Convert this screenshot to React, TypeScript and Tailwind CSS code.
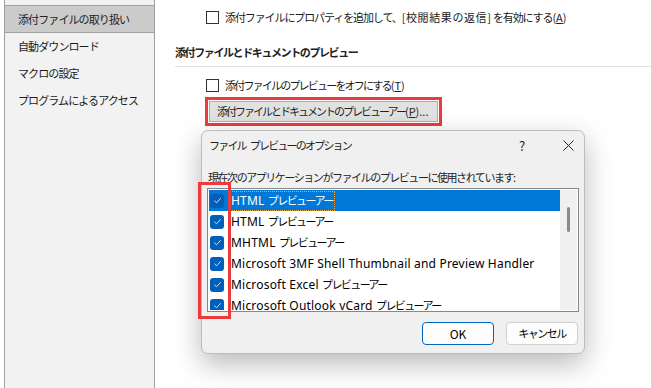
import React from 'react';

const font = { fontFamily: '"Noto Sans CJK JP", "Noto Sans", sans-serif' };

function Box() {
  return <span className="inline-block w-[13px] h-[13px] border border-[#333] bg-white shrink-0" />;
}

function BlueCheck() {
  return (
    <span className="w-[14px] h-[14px] rounded-[3px] bg-[#005fb8] flex items-center justify-center shrink-0">
      <svg width="9" height="9" viewBox="0 0 10 10">
        <path d="M1.5 5.2 L4 7.5 L8.5 2.5" fill="none" stroke="#cfe3f7" strokeWidth="1.1" />
      </svg>
    </span>
  );
}

// latin part, japanese part
const items: [string, string][] = [
  ['HTML ', 'プレビューアー'],
  ['HTML ', 'プレビューアー'],
  ['MHTML ', 'プレビューアー'],
  ['Microsoft 3MF Shell Thumbnail and Preview Handler', ''],
  ['Microsoft Excel ', 'プレビューアー'],
  ['Microsoft Outlook vCard ', 'プレビューアー'],
];

export default function App() {
  return (
    <div className="relative w-[651px] h-[388px] overflow-hidden bg-white text-[11px] tracking-[-0.9px] text-[#1a1a1a] whitespace-nowrap" style={font}>
      <div className="flex h-full">
        <div className="w-[151px] ml-[4px] h-full bg-[#f2f2f2] border-l border-r border-[#a0a0a0] pt-[5px] shrink-0">
          <div className="h-[28px] bg-[#cbcbcb] border-y border-[#a0a0a0] pl-[13px] flex items-center text-[#222]">添付ファイルの取り扱い</div>
          <div className="h-[27px] pl-[13px] flex items-center">自動ダウンロード</div>
          <div className="h-[27px] pl-[13px] flex items-center">マクロの設定</div>
          <div className="h-[27px] pl-[13px] flex items-center">プログラムによるアクセス</div>
        </div>
        <div className="flex-1 pt-[10px] pl-[20px]">
          <div className="flex items-center gap-[6px] pl-[31px] h-[14px]">
            <Box />
            <span className="tracking-[-1.1px] whitespace-pre">
              添付ファイルにプロパティを追加して、<span className="tracking-[0.6px]">[校閲結果の返信]</span> を有効にする<span className="tracking-normal">(<u>A</u>)</span>
            </span>
          </div>
          <div className="mt-[21px] font-bold text-[#222] h-[14px] flex items-center tracking-[-1.4px]">添付ファイルとドキュメントのプレビュー</div>
          <div className="mt-[7px] h-px bg-[#e0e0e0]" />
          <div className="mt-[11px] flex items-center gap-[6px] pl-[31px] h-[14px]">
            <Box />
            <span className="tracking-[-1.8px]">添付ファイルのプレビューをオフにする<span className="tracking-normal">(<u>T</u>)</span></span>
          </div>
          <div className="mt-[5px] ml-[30px] w-[237px] border-[3px] border-[#ee3a3a] p-px">
            <div className="h-[21px] bg-[#e1e1e1] border border-[#adadad] flex items-center pl-[7px] text-[#222] tracking-[-2px]">
              添付ファイルとドキュメントのプレビューアー<span className="tracking-normal">(<u>P</u>)...</span>
            </div>
          </div>
        </div>
      </div>

      <div className="absolute left-[201px] top-[130px] w-[384px] h-[224px] bg-[#f0f0f0] border border-[#bdbdbd] rounded-[7px] shadow-[0_10px_28px_rgba(0,0,0,0.28)] flex flex-col">
        <div className="h-[29px] flex items-center pl-[7px] pr-[10px]">
          <span className="flex-1 text-[#222] tracking-[-1.8px]">ファイル<span className="inline-block w-[4px]" />プレビューのオプション</span>
          <span className="w-[14px] text-center mr-[34px] text-[13px] tracking-normal">?</span>
          <svg width="11" height="11" viewBox="0 0 11 11"><path d="M0.5 0.5 L10.5 10.5 M10.5 0.5 L0.5 10.5" stroke="#222" strokeWidth="1" /></svg>
        </div>
        <div className="mt-[10px] pl-[6px] h-[14px] flex items-center text-[#222] tracking-[-1.45px]">現在次のアプリケーションがファイルのプレビューに使用されています:</div>
        <div className="mt-[4px] mx-[5px] h-[124px] border border-[#828790] bg-white flex p-px overflow-hidden">
          <div className="flex-1 flex flex-col overflow-hidden">
            {items.map(([l, j], i) => (
              <div key={i} className={`h-[21px] flex items-center gap-[6px] pl-[1px] shrink-0 ${i === 0 ? 'bg-[#0078d7] text-white' : 'text-black'}`}>
                <BlueCheck />
                <span className={`px-px ${i === 0 ? 'outline-1 outline-dotted outline-[#e8a040]' : ''}`}>
                  <span className="text-[12px] tracking-[0.2px] whitespace-pre" style={{ fontFamily: '"Noto Sans", sans-serif' }}>{l}</span>
                  {j && <span className="tracking-[-1.6px]">{j}</span>}
                </span>
              </div>
            ))}
          </div>
          <div className="w-[17px] bg-[#f0f0f0] flex justify-center pt-[17px]">
            <div className="w-[3px] h-[25px] bg-[#8a8a8a] rounded-full" />
          </div>
        </div>
        <div className="flex justify-end gap-[12px] mt-[10px] pr-[6px]">
          <div className="w-[72px] h-[23px] rounded-[4px] border border-[#0067c0] bg-[#fdfdfd] flex items-center justify-center text-black text-[12px] tracking-normal">OK</div>
          <div className="w-[72px] h-[23px] rounded-[4px] border border-[#d0d0d0] bg-[#fdfdfd] flex items-center justify-center text-black tracking-[-1.5px]">キャンセル</div>
        </div>
      </div>

      <div className="absolute left-[198px] top-[182px] w-[33px] h-[137px] border-[3px] border-[#ee3a3a]" />
    </div>
  );
}
